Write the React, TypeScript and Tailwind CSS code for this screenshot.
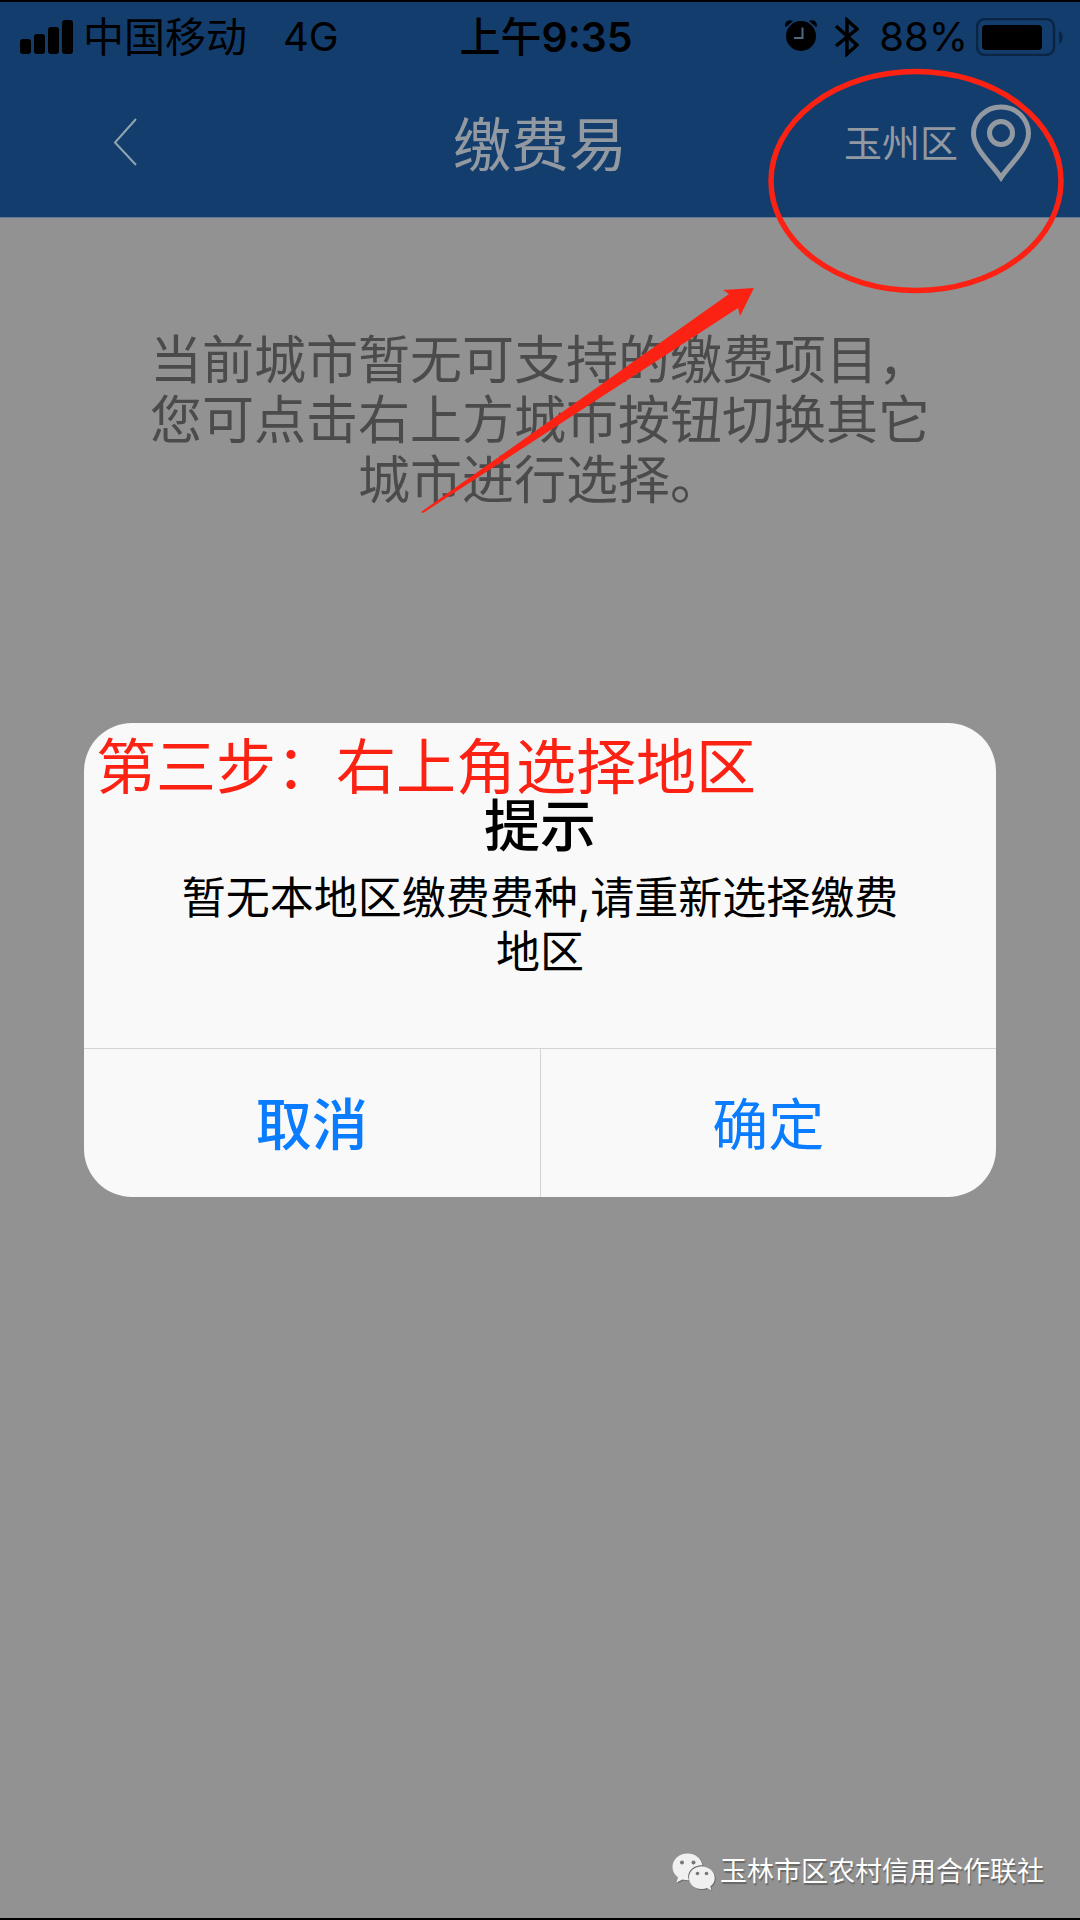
import type { ReactNode } from "react";

const signalBars = ["h-[15px]", "h-5", "h-[27px]", "h-[34px]"];

function AlarmIcon() {
  return (
    <svg viewBox="0 0 32 36" className="h-9 w-8" aria-hidden="true">
      <path d="M0 7 C0 2 4 0 8 2 L1 8Z M32 7 C32 2 28 0 24 2 L31 8Z" fill="#000" />
      <circle cx="16" cy="17" r="15" fill="#000" />
      <path d="M17.5 8.5V19H9" fill="none" stroke="#4b6885" strokeWidth="2" />
    </svg>
  );
}

function BluetoothIcon() {
  return (
    <svg viewBox="0 0 24 40" className="h-10 w-6" aria-hidden="true">
      <path
        d="M1 9 L22 28 L12 37 V3 L22 12 L1 29"
        fill="none"
        stroke="#000"
        strokeWidth="3.5"
      />
    </svg>
  );
}

function BatteryIcon() {
  return (
    <svg viewBox="0 0 88 38" className="h-[38px] w-[88px]" aria-hidden="true">
      <rect x="1" y="1" width="77" height="36" rx="8" fill="none" stroke="#0b2545" strokeWidth="2.5" />
      <rect x="6" y="7" width="60" height="25" rx="4" fill="#000" />
      <path d="M83 13 C88 15 88 23 83 26Z" fill="#0b2545" />
    </svg>
  );
}

function PinIcon() {
  return (
    <svg viewBox="0 0 62 78" className="h-[78px] w-[62px]" fill="none" stroke="#9299a1" strokeWidth="5" aria-hidden="true">
      <path d="M31 73.5 C22 60 3.5 45 3.5 29.5 A27.5 26.5 0 0 1 58.5 29.5 C58.5 45 40 60 31 73.5Z" />
      <circle cx="31" cy="29" r="11.5" />
    </svg>
  );
}

function WechatIcon() {
  return (
    <svg viewBox="0 0 44 38" className="h-[38px] w-11 drop-shadow-[1px_1px_0_#6b6b6b]" aria-hidden="true">
      <path
        d="M15.5 0.5 C7 0.5 0.5 6.5 0.5 14 C0.5 18 2.5 22 6 24.5 L4.5 29.5 L10.5 26.5 C12.5 27 14.5 27.5 17 27.3 C14 19 21 12 30.5 12.2 C29 5 23 0.5 15.5 0.5Z"
        fill="#f0f0f0"
      />
      <path
        d="M29.5 13.5 C22 13.5 17 18.5 17 25 C17 31.5 22.5 36 29.5 36 C31.5 36 33 35.7 34.8 35 L39.5 37.5 L38.3 33.3 C41.2 31.3 42.7 28.5 42.7 25 C42.7 18.5 37 13.5 29.5 13.5Z"
        fill="#f0f0f0"
      />
      <g fill="#777">
        <circle cx="10" cy="9.5" r="2" />
        <circle cx="21.5" cy="9.5" r="2" />
        <circle cx="25.5" cy="20.5" r="1.8" />
        <circle cx="34.5" cy="20.5" r="1.8" />
      </g>
    </svg>
  );
}

function StatusBar() {
  return (
    <div className="grid h-[70px] grid-cols-3 items-center pr-4 pl-5 text-[40px] leading-none text-black">
      <div className="flex items-center gap-6">
        <div className="flex items-center gap-2.5">
          <div className="flex items-end gap-[3px]">
            {signalBars.map((height) => (
              <span key={height} className={`w-[11px] rounded-[3px] bg-black ${height}`} />
            ))}
          </div>
          <span className="text-[41px]">中国移动</span>
        </div>
        <span className="ml-3">4G</span>
      </div>
      <div className="pl-2 text-center text-[41px] font-medium">
        上午<span className="font-semibold">9:35</span>
      </div>
      <div className="flex items-center justify-end gap-2">
        <AlarmIcon />
        <div className="flex items-center gap-5 pl-2.5">
          <BluetoothIcon />
          <span>88%</span>
        </div>
        <BatteryIcon />
      </div>
    </div>
  );
}

function NavBar() {
  return (
    <div className="grid h-[145px] grid-cols-3 items-start text-[#9299a1]">
      <button type="button" aria-label="返回" className="ml-28 mt-[46px] w-8">
        <svg viewBox="0 0 32 48" className="h-12 w-8" fill="none" stroke="#8fa5b0" strokeWidth="2" aria-hidden="true">
          <path d="M24 1 L3 24.5 L24 47" />
        </svg>
      </button>
      <h1 className="mt-[43px] text-center text-[58px] leading-[60px]">缴费易</h1>
      <button type="button" className="mt-8 mr-12 flex items-center justify-end gap-3">
        <span className="text-[38px] leading-none">玉州区</span>
        <PinIcon />
      </button>
    </div>
  );
}

function DialogButton({ children, className }: { children: ReactNode; className: string }) {
  return (
    <button type="button" className={`flex-1 pt-1 text-[56px] text-[#0a7cff] ${className}`}>
      {children}
    </button>
  );
}

function AlertDialog() {
  return (
    <div className="absolute inset-0 flex items-center justify-center px-[84px]">
      <div
        role="alertdialog"
        aria-labelledby="alert-title"
        aria-describedby="alert-text"
        className="relative w-full overflow-hidden rounded-[48px] bg-[#f9f9f9] text-center text-black"
      >
        <p className="absolute top-3.5 left-3 text-[60px] leading-[60px] whitespace-nowrap text-[#fb2214]">
          第三步：右上角选择地区
        </p>
        <div className="px-20 pt-[75px] pb-[69px]">
          <h2 id="alert-title" className="text-[56px] leading-[56px] font-medium">
            提示
          </h2>
          <p id="alert-text" className="mt-[17px] text-[44px] leading-[54px]">
            暂无本地区缴费费种,请重新选择缴费地区
          </p>
        </div>
        <div className="flex h-[149px] border-t border-[#d4d4d4]">
          <DialogButton className="border-r border-[#d4d4d4] font-medium">取消</DialogButton>
          <DialogButton className="font-normal">确定</DialogButton>
        </div>
      </div>
    </div>
  );
}

// red ellipse around the region picker, with the arrow that leads to it
function Annotation() {
  return (
    <svg viewBox="0 2 1080 600" className="pointer-events-none absolute inset-x-0 top-0 w-full" aria-hidden="true">
      <ellipse cx="916" cy="181" rx="145" ry="109.5" fill="none" stroke="#fb2214" strokeWidth="5.5" />
      <path d="M421 512 L729 294 L723 290 L754 288 L740 316 L738 308 L423 513 Z" fill="#fb2214" />
    </svg>
  );
}

export default function App() {
  return (
    <div className="relative flex min-h-screen flex-col border-y-2 border-black bg-[#929292] font-['Inter','Noto_Sans_CJK_SC',sans-serif]">
      <header className="border-b border-[#5f7896] bg-[#133d6d]">
        <StatusBar />
        <NavBar />
      </header>

      <main className="flex-1 px-[150px] pt-[113px]">
        <p className="text-center text-[52px] leading-[60px] text-[#4b4b4b]">
          当前城市暂无可支持的缴费项目，
          <br />
          您可点击右上方城市按钮切换其它
          <br />
          城市进行选择。
        </p>
      </main>

      <footer className="flex items-center justify-end gap-1 px-9 pb-[26px] text-[27px] leading-10 text-white">
        <WechatIcon />
        <span className="[text-shadow:1px_2px_1px_#666]">玉林市区农村信用合作联社</span>
      </footer>

      <AlertDialog />
      <Annotation />
    </div>
  );
}
